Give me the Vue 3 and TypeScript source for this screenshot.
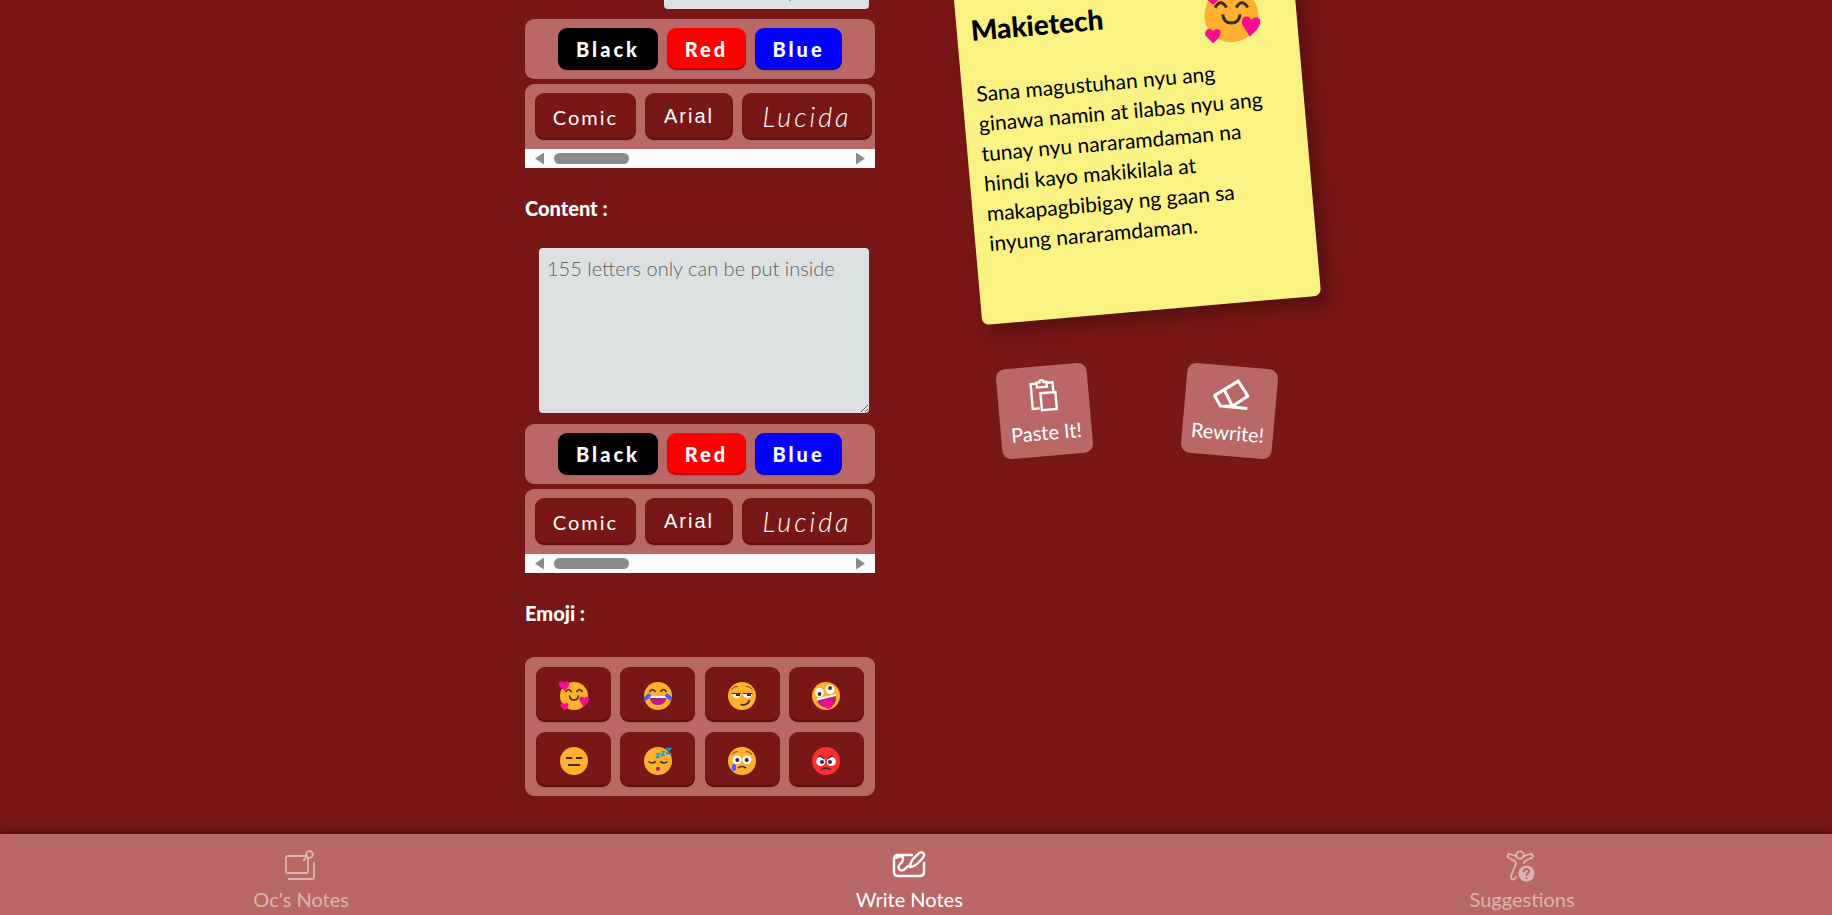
<script setup lang="ts">
import { ref } from 'vue'

interface Choice {
  id: string
  label: string
}

const colors: Choice[] = [
  { id: 'black', label: 'Black' },
  { id: 'red', label: 'Red' },
  { id: 'blue', label: 'Blue' },
]

const fonts: Choice[] = [
  { id: 'comic', label: 'Comic' },
  { id: 'arial', label: 'Arial' },
  { id: 'lucida', label: 'Lucida' },
]

const loveFace = `
  <circle cx="14" cy="14" r="14" fill="#ffb02e"/>
  <path d="M5.5 10Q8.500 5 11.500 10M16.500 10Q19.500 5 22.500 10M9.500 13.500Q10 18 14 18Q18 18 18.500 13.500" fill="none" stroke="#402a32" stroke-width="1.600"/>
  <path d="M4.500 8.500L-1 4Q-2 0 1.500 -.8Q3.500 -1 4.500 .5Q8 -2 9.300 1Q9.500 5 4.500 8.500ZM23.500 25L19.500 18.500Q19 15 21.500 14.600Q23.500 14.600 24.200 16.300Q27 14 28.800 16Q30 20 23.500 25ZM4.500 28.500L.5 24.500Q0 21.500 2.500 21Q4 21 4.600 22.300Q6.500 20 8.300 22Q9 25 4.500 28.500Z" fill="#fa0a91"/>`

const emojis: { name: string; art: string }[] = [
  { name: 'Loved', art: loveFace },
  {
    name: 'Laughing',
    art: `<circle cx="14" cy="14" r="14" fill="#ffb02e"/>
      <path d="M5.500 10Q8.500 5 11.500 10M16.500 10Q19.500 5 22.500 10" fill="none" stroke="#402a32" stroke-width="1.600"/>
      <path d="M5.500 14H22.500Q22 23 14 23Q6 23 5.500 14Z" fill="#bb1d80"/><path d="M5.500 14H22.500L22 16H6Z" fill="#fff"/>
      <path d="M1.500 16.500L5 13.500M26.500 16.500L23 13.500" stroke="#3f5fff" stroke-width="4" stroke-linecap="round"/>`,
  },
  {
    name: 'Smirking',
    art: `<circle cx="14" cy="14" r="14" fill="#ffb02e"/>
      <path d="M3.500 7.500Q6 4 9.500 4.500M18 4.500Q22 4 24.500 7.500" fill="none" stroke="#70431a"/>
      <path d="M4 11.500H13Q12.500 16 8.500 16Q4.500 16 4 11.500ZM15 11.500H24Q23.500 16 19.500 16Q15.500 16 15 11.500Z" fill="#fff"/>
      <path d="M3.500 11.500H13M15 11.500H24.500" stroke="#402a32"/>
      <path d="M8 12H12V14H8ZM19 12H23V14H19Z" fill="#402a32"/>
      <path d="M12.500 22.500Q20 24 21.500 18" fill="none" stroke="#402a32" stroke-width="1.700"/>`,
  },
  {
    name: 'Zany',
    art: `<circle cx="14" cy="14" r="14" fill="#ffb02e"/>
      <circle cx="7.300" cy="10.500" r="4.500" fill="#fff"/><circle cx="18" cy="7.300" r="4.500" fill="#fff"/>
      <circle cx="7.500" cy="12" r="1.900" fill="#402a32"/><circle cx="18" cy="6" r="1.900" fill="#402a32"/>
      <path d="M5 17.500L24 13Q25 22 18 25Q7 27 5 17.500Z" fill="#bb1d80"/>
      <path d="M9 22Q13 17 20 18L21 23Q18 27 16 27Q13 26 9 22Z" fill="#fa0a91"/>
      <path d="M5 17.500L24 13" stroke="#fff" stroke-width="1.800"/>`,
  },
  {
    name: 'Expressionless',
    art: `<circle cx="14" cy="14" r="14" fill="#ffb02e"/>
      <path d="M6 11H12.300M16 11H22.300M8 18H20" stroke="#402a32" stroke-width="1.800"/>`,
  },
  {
    name: 'Sleeping',
    art: `<circle cx="14" cy="14" r="14" fill="#ffb02e"/>
      <path d="M4.500 14.500Q8 17.500 11.800 14.500M16.200 14.500Q20 17.500 23.500 14.500" fill="none" stroke="#402a32" stroke-width="1.600"/>
      <circle cx="14" cy="21.800" r="2.100" fill="#bb1d80"/>
      <path d="M12 7H15.500L12.500 10.500H16M17 4.500H20.500L17.500 8.500H21M22 1.500H26.500L22.500 6.800H27.500" fill="none" stroke="#00a6ed" stroke-width="1.500"/>`,
  },
  {
    name: 'Crying',
    art: `<circle cx="14" cy="14" r="14" fill="#ffb02e"/>
      <path d="M4 7.500Q6 4.500 9.500 4.500M18 4.500Q22 4.500 24 7.500" fill="none" stroke="#70431a"/>
      <circle cx="9" cy="12.800" r="4.500" fill="#fff"/><circle cx="19" cy="12.800" r="4.500" fill="#fff"/>
      <circle cx="9.300" cy="13" r="2" fill="#402a32"/><circle cx="18.700" cy="13" r="2" fill="#402a32"/>
      <path d="M10 21Q14 18 18 21" fill="none" stroke="#402a32" stroke-width="1.600"/>
      <rect x="4" y="17" width="4" height="7" rx="2" fill="#3f5fff"/>`,
  },
  {
    name: 'Angry',
    art: `<circle cx="14" cy="14" r="14" fill="#f92f34"/>
      <circle cx="8.700" cy="14.500" r="4.500" fill="#fff"/><circle cx="19.300" cy="14.500" r="4.500" fill="#fff"/>
      <circle cx="10" cy="15" r="2" fill="#402a32"/><circle cx="18" cy="15" r="2" fill="#402a32"/>
      <path d="M7.500 8.500L12.500 12M20.500 8.500L15.500 12M9 23Q14 19 19 23" fill="none" stroke="#402a32" stroke-width="1.500"/>`,
  },
]

const title = ref('')
const content = ref('')
</script>

<template>
  <div class="page">
    <main class="editor">
      <form class="form" @submit.prevent>
        <input v-model="title" class="field title-field" type="text" placeholder="15 letters only" aria-label="Title" />
        <div class="panel colors">
          <button v-for="c in colors" :key="c.id" type="button" class="btn color" :class="c.id">{{ c.label }}</button>
        </div>
        <div class="fonts">
          <div class="font-list">
            <button v-for="f in fonts" :key="f.id" type="button" class="btn font" :class="f.id">{{ f.label }}</button>
          </div>
          <div class="scrollbar"><i class="arrow left"></i><i class="track"><i class="thumb"></i></i><i class="arrow right"></i></div>
        </div>

        <label class="heading" for="content">Content :</label>
        <textarea id="content" v-model="content" class="field content-field" placeholder="155 letters only can be put inside"></textarea>
        <div class="panel colors">
          <button v-for="c in colors" :key="c.id" type="button" class="btn color" :class="c.id">{{ c.label }}</button>
        </div>
        <div class="fonts">
          <div class="font-list">
            <button v-for="f in fonts" :key="f.id" type="button" class="btn font" :class="f.id">{{ f.label }}</button>
          </div>
          <div class="scrollbar"><i class="arrow left"></i><i class="track"><i class="thumb"></i></i><i class="arrow right"></i></div>
        </div>

        <h2 class="heading">Emoji :</h2>
        <div class="panel emojis">
          <button v-for="e in emojis" :key="e.name" type="button" class="btn emoji" :aria-label="e.name">
            <svg viewBox="0 0 28 28" v-html="e.art"></svg>
          </button>
        </div>
      </form>

      <section class="preview">
        <article class="note">
          <header class="note-head">
            <h1>Makietech</h1>
            <svg class="note-emoji" viewBox="0 0 28 28" v-html="loveFace"></svg>
          </header>
          <p>Sana magustuhan nyu ang<br />ginawa namin at ilabas nyu ang<br />tunay nyu nararamdaman na<br />hindi kayo makikilala at<br />makapagbibigay ng gaan sa<br />inyung nararamdaman.</p>
        </article>
        <div class="actions">
          <button type="button" class="action paste">
            <svg viewBox="0 0 34 34" fill="none" stroke="#fff" stroke-width="2.400">
              <path d="M12 30H5V5H11M21 5H27V14M11 4H14Q14 2 16 2Q18 2 18 4H21V9H11ZM14 15H29V32H14Z" />
            </svg>
            <span>Paste It!</span>
          </button>
          <button type="button" class="action rewrite">
            <svg viewBox="-18 -17 36 34" fill="none" stroke="#fff" stroke-width="3">
              <path d="M5.500-14.500L16.500-.5L2 11L-9.900 11.900L-16.800 2ZM-7.400-4.500L2 11M-10 11.900H17" />
            </svg>
            <span>Rewrite!</span>
          </button>
        </div>
      </section>
    </main>

    <nav class="tabs">
      <a href="#notes" class="tab">
        <svg viewBox="0 0 32 32" fill="none" stroke="currentColor" stroke-width="1.800">
          <path d="M21 6H3Q1 6 1 8V21Q1 23 3 23H21Q23 23 23 21V8M18 11L22 7M29 12V27Q29 29 27 29H3" />
          <circle cx="24.500" cy="4.500" r="3.300" />
        </svg>
        <span>Oc's Notes</span>
      </a>
      <a href="#write" class="tab active" aria-current="page">
        <svg viewBox="0 0 34 32" fill="none" stroke="currentColor" stroke-width="2.400" stroke-linecap="round">
          <path d="M20 5H6Q2 5 2 9V22Q2 26 6 26H28Q32 26 32 22V13M4 8Q11 4 11 9Q11 12 8 14Q5 17 8 20C12 22 14 18 16 16M18 17Q18 11 25 5Q29 1 31 3Q34 5 29 10Q23 17 18 17Z" />
        </svg>
        <span>Write Notes</span>
      </a>
      <a href="#suggestions" class="tab">
        <svg viewBox="0 0 32 32" fill="none" stroke="currentColor" stroke-width="1.800" stroke-linecap="round" stroke-linejoin="round">
          <circle cx="14" cy="5" r="3.700" />
          <path d="M10 6L4 4Q1.500 4 1.500 6.500Q2 8 4 8.500L9 11Q10 12 9.500 15L5 26Q4.500 29 7 29.500Q9 29.500 10 27M18 6L24 4Q27 4 27 6.500Q26.500 8 24 8.500L19 11L18 13" />
          <circle cx="20.500" cy="23.500" r="8" fill="currentColor" stroke="none" />
          <path d="M17.800 21.500Q18 19 20.500 19Q23 19 23 21.200Q23 22.500 21.500 23.300Q20.500 24 20.500 25M20.500 28V28.200" stroke="#b96767" stroke-width="2" />
        </svg>
        <span>Suggestions</span>
      </a>
    </nav>
  </div>
</template>

<style>
body {
  margin: 0;
  background: #791616;
}
</style>

<style scoped>
* {
  box-sizing: border-box;
}
.page {
  display: flex;
  flex-direction: column;
  min-height: 100vh;
  overflow: hidden;
  background: #791616;
  font-family: Lato, "Open Sans", sans-serif;
  font-size: 20px;
  font-weight: 400;
}
button,
input,
textarea {
  font: inherit;
  border: 0;
}
button {
  padding: 0;
  cursor: pointer;
}
.editor {
  flex: 1;
  display: flex;
  justify-content: center;
  align-items: flex-start;
  gap: 92px;
  margin-top: -30px;
}
.form {
  display: flex;
  flex-direction: column;
  width: 350px;
}
.field {
  margin-right: 6px;
  padding: 8px;
  border-radius: 4px;
  outline: 0;
  background: #dde1e2;
  color: #000;
  font-weight: 300;
}
.field::placeholder {
  color: #606060;
  opacity: 1;
}
.title-field {
  align-self: flex-end;
  width: 205px;
  height: 39px;
  margin-bottom: 10px;
}
.content-field {
  height: 165px;
  margin: 0 6px 11px 14px;
  resize: both;
}
.panel {
  border-radius: 9px;
  background: #b96767;
}
.btn {
  border-radius: 9px;
  background: #791616;
  color: #fff;
  box-shadow: inset 0 -2px 1px rgba(0, 0, 0, 0.25), 0 1px 1px rgba(0, 0, 0, 0.1);
}
.colors {
  display: flex;
  justify-content: center;
  gap: 9px;
  padding: 9px;
  margin-bottom: 5px;
}
.color {
  height: 42px;
  font-weight: 900;
  letter-spacing: 3px;
}
.black {
  width: 100px;
  background: #000;
}
.red {
  width: 79px;
  background: #f00;
}
.blue {
  width: 87px;
  background: #00f;
}
.fonts {
  border-radius: 9px 9px 0 0;
  overflow: hidden;
  background: #b96767;
}
.font-list {
  display: flex;
  gap: 9px;
  padding: 9px 3px 9px 10px;
}
.font {
  height: 47px;
  letter-spacing: 2px;
}
.comic {
  width: 101px;
}
.arial {
  width: 88px;
  font-family: "Liberation Sans", Arial, sans-serif;
}
.lucida {
  flex: 1;
  font-family: "Lucida Handwriting", Lato, cursive;
  font-size: 27px;
  font-style: italic;
  font-weight: 300;
  letter-spacing: 3px;
  line-height: 40px;
}
.scrollbar {
  display: flex;
  align-items: center;
  gap: 10px;
  height: 19px;
  padding: 0 10px;
  background: #fcfcfc;
}
.track {
  flex: 1;
}
.thumb {
  display: block;
  width: 75px;
  height: 11px;
  border-radius: 6px;
  background: #8b8b8b;
}
.arrow {
  width: 9px;
  height: 12px;
  background: #8b8b8b;
}
.left {
  clip-path: polygon(0 50%, 100% 0, 100% 100%);
}
.right {
  clip-path: polygon(0 0, 100% 50%, 0 100%);
}
.heading {
  display: block;
  height: 80px;
  margin: 0;
  color: #fff;
  font-size: 20px;
  font-weight: 900;
  line-height: 80px;
}
.emojis {
  display: grid;
  grid-template-columns: repeat(4, 75px);
  justify-content: space-between;
  row-gap: 10px;
  margin-top: 4px;
  padding: 10px 11px 9px;
}
.emoji {
  display: grid;
  place-items: center;
  height: 55px;
  padding-top: 2px;
}
.emoji svg {
  width: 28px;
  height: 28px;
  overflow: visible;
}
.preview {
  width: 340px;
  padding-top: 1px;
}
.note {
  height: 340px;
  padding: 26px 14px;
  border-radius: 7px;
  background: #faf384;
  color: #000;
  box-shadow: 8px 10px 14px rgba(0, 0, 0, 0.25);
  transform: rotate(-5deg);
}
.note-head {
  display: flex;
  align-items: flex-start;
  justify-content: space-between;
  height: 54px;
  padding-right: 24px;
}
h1 {
  margin: 0;
  font-size: 28px;
  font-weight: 900;
  line-height: 38px;
}
.note-emoji {
  width: 54px;
  height: 54px;
  overflow: visible;
  transform: rotate(5deg);
}
.note p {
  margin: 14px 0 0;
  font-size: 21px;
  line-height: 30px;
  white-space: nowrap;
}
.actions {
  display: flex;
  justify-content: center;
  gap: 94px;
  margin-top: 55px;
}
.action {
  display: flex;
  flex-direction: column;
  align-items: center;
  gap: 8px;
  width: 91px;
  height: 90px;
  padding-top: 12px;
  border-radius: 9px;
  background: #b96767;
  color: #fff;
}
.action svg {
  width: 36px;
  height: 34px;
}
.paste {
  transform: rotate(-5deg);
}
.rewrite {
  transform: rotate(5deg);
}
.tabs {
  position: sticky;
  bottom: 0;
  display: flex;
  justify-content: space-around;
  height: 81px;
  padding: 16px 4px 0 0;
  background: #b96767;
  box-shadow: 0 -2px 7px rgba(0, 0, 0, 0.4);
}
.tab {
  display: flex;
  flex-direction: column;
  align-items: center;
  gap: 5px;
  color: rgba(255, 255, 255, 0.5);
  text-decoration: none;
}
.tab svg {
  width: 34px;
  height: 32px;
}
.active {
  color: #fff;
}
</style>
